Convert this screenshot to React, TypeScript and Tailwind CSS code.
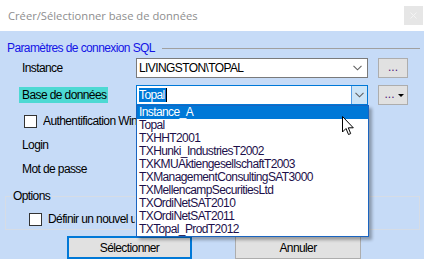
import React from "react"

const items = [
  "Instance_A",
  "Topal",
  "TXHHT2001",
  "TXHunki_IndustriesT2002",
  "TXKMUAktiengesellschaftT2003",
  "TXManagementConsultingSAT3000",
  "TXMellencampSecuritiesLtd",
  "TXOrdiNetSAT2010",
  "TXOrdiNetSAT2011",
  "TXTopal_ProdT2012",
]

function Chevron() {
  return (
    <svg width="9" height="6" viewBox="0 0 9 6" className="block">
      <path d="M0.5 0.8 L4.5 4.8 L8.5 0.8" fill="none" stroke="#606060" strokeWidth="1.1" />
    </svg>
  )
}

// label is clipped where the open list covers it
function Checkbox({ label, width }: { label: string; width: string }) {
  return (
    <div className="flex items-center h-[14px]">
      <div className="w-[13px] h-[13px] border border-[#333] bg-white ml-[24px] mr-[6px] shrink-0" />
      <span className={`whitespace-nowrap overflow-hidden h-[14px] leading-[14px] ${width}`}>{label}</span>
    </div>
  )
}

export default function App() {
  return (
    <div
      className="relative w-[424px] h-[259px] overflow-hidden bg-[#c6dbf7] text-[12px] tracking-[-0.6px] text-black leading-none"
      style={{ fontFamily: '"Liberation Sans", Arial, sans-serif' }}
    >
      {/* title bar */}
      <div className="h-[31px] bg-white flex items-center justify-between pl-[8px] pr-[1px]">
        <span
          className="text-[11.2px] tracking-normal text-[#8e8e8e]"
          style={{ fontFamily: '"Open Sans", "Noto Sans", sans-serif' }}
        >
          Créer/Sélectionner base de données
        </span>
        <div className="w-[19px] h-[19px] bg-[#e6e6e6] flex items-center justify-center">
          <svg width="7" height="7" viewBox="0 0 7 7">
            <path d="M0.5 0.5 L6.5 6.5 M6.5 0.5 L0.5 6.5" stroke="#f4f4f4" strokeWidth="1" />
          </svg>
        </div>
      </div>

      {/* group header */}
      <div className="mt-[10px] h-[14px] flex items-center">
        <span className="pl-[7px] text-[#1414e6] whitespace-nowrap">Paramètres de connexion SQL</span>
        <div className="flex-1 h-px bg-[#a0a0a0] ml-[7px] mr-[4px]" />
      </div>

      {/* instance */}
      <div className="mt-[3px] h-[20px] flex items-center">
        <span className="w-[136px] pl-[22px]">Instance</span>
        <div className="w-[232px] h-[20px] bg-white border border-[#7a7a7a] flex items-center justify-between pl-[2px] pr-[5px]">
          <span>LIVINGSTON\TOPAL</span>
          <Chevron />
        </div>
        <div className="ml-[10px] w-[30px] h-[20px] bg-[#e1e1e1] border border-[#adadad] flex items-center justify-center text-[#50207a] tracking-normal pb-[3px]">
          ...
        </div>
      </div>

      {/* base de données */}
      <div className="mt-[7px] h-[20px] flex items-center">
        <div className="w-[136px] pl-[19px]">
          <span className="inline-flex items-center h-[16px] w-[89px] pl-[3px] bg-[#4dd9d3]">Base de données</span>
        </div>
        <div className="w-[232px] h-[20px] bg-white border border-[#0078d7] flex items-stretch">
          <div className="flex-1 flex items-center pl-[2px]">
            <span className="bg-[#0078d7] text-white h-[14px] flex items-center pr-[1px]">Topal</span>
            <div className="w-px h-[14px] bg-black" />
          </div>
          <div className="w-[16px] bg-[#cce4f7] border-l border-[#569de5] flex items-center justify-center">
            <Chevron />
          </div>
        </div>
        <div className="ml-[10px] w-[30px] h-[20px] bg-[#e1e1e1] border border-[#adadad] flex items-center justify-center gap-[3px] pl-[2px]">
          <span className="text-[#50207a] tracking-normal pb-[3px]">...</span>
          <svg width="6" height="3" viewBox="0 0 6 3">
            <path d="M0 0 L6 0 L3 3 Z" fill="#000" />
          </svg>
        </div>
      </div>

      <div className="mt-[9px]">
        <Checkbox label="Authentification Windows" width="w-[93px]" />
      </div>
      <div className="mt-[10px] h-[14px] flex items-center pl-[22px]">Login</div>
      <div className="mt-[10px] h-[14px] flex items-center pl-[22px]">Mot de passe</div>

      {/* options */}
      <fieldset className="mt-[13px] mx-[5px] w-[415px] border border-[#d6dce5] pb-[3px]">
        <legend className="ml-[5px] px-[2px] h-[14px] leading-[14px]">Options</legend>
        <div className="mt-[9px] -ml-[1px]">
          <Checkbox label="Définir un nouvel utilisateur" width="w-[87px]" />
        </div>
      </fieldset>

      {/* buttons */}
      <div className="mt-[6px] flex">
        <div className="ml-[67px] w-[125px] h-[23px] bg-[#e1e1e1] border-2 border-[#0078d7] flex items-center justify-center">
          Sélectionner
        </div>
        <div className="ml-[43px] w-[126px] h-[23px] bg-[#e1e1e1] border border-[#adadad] flex items-center justify-center">
          Annuler
        </div>
      </div>

      {/* open dropdown list */}
      <div className="absolute left-[136px] top-[105px] w-[233px] h-[132px] bg-white border border-[#1a64c0] shadow-[3px_3px_3px_rgba(0,0,0,0.3)] text-[#1c0f4a]">
        {items.map((it, i) => (
          <div
            key={it}
            className={
              i === 0
                ? "h-[13px] leading-[12px] pl-[2px] bg-[#0078d7] text-white"
                : "h-[13px] leading-[12px] pl-[2px]"
            }
          >
            {it}
          </div>
        ))}
      </div>

      {/* mouse cursor */}
      <svg className="absolute left-[342px] top-[116px]" width="13" height="20" viewBox="0 0 13 20">
        <path
          d="M0.5 0.5 L0.5 16 L4 12.5 L6.5 18.5 L8.7 17.6 L6.3 11.8 L11.3 11.8 Z"
          fill="#fff"
          stroke="#000"
          strokeWidth="1"
          strokeLinejoin="miter"
        />
      </svg>
    </div>
  )
}
